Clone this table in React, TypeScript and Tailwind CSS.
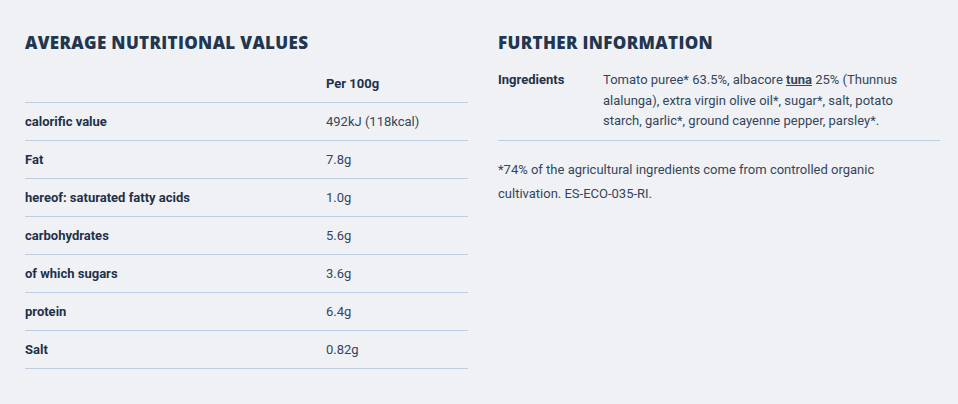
const rows = [
  ["calorific value", "492kJ (118kcal)"],
  ["Fat", "7.8g"],
  ["hereof: saturated fatty acids", "1.0g"],
  ["carbohydrates", "5.6g"],
  ["of which sugars", "3.6g"],
  ["protein", "6.4g"],
  ["Salt", "0.82g"],
];

export default function App() {
  return (
    <div className="min-h-[404px] w-[958px] bg-[#eff1f5] font-['Roboto',sans-serif] text-[13px] text-[#34465c]">
      <div className="flex gap-[30px] pl-[25px] pr-[18px] pt-[31px]">
        <section className="w-[443px]">
          <h2 className="font-['Open_Sans',sans-serif] text-[17px] font-extrabold uppercase leading-6 tracking-[0.02em] text-[#22364f]">
            Average nutritional values
          </h2>
          <div className="mt-[10px]">
            <div className="flex h-[38px] items-center border-b border-[#bccfe2]">
              <span className="w-[301px]" />
              <span className="font-bold text-[#1f3148]">Per 100g</span>
            </div>
            {rows.map(([label, value]) => (
              <div key={label} className="flex h-[38px] items-center border-b border-[#bccfe2]">
                <span className="w-[301px] font-bold text-[#1f3148]">{label}</span>
                <span>{value}</span>
              </div>
            ))}
          </div>
        </section>
        <section className="w-[442px]">
          <h2 className="font-['Open_Sans',sans-serif] text-[17px] font-extrabold uppercase leading-6 tracking-[0.02em] text-[#22364f]">
            Further information
          </h2>
          <div className="mt-[15px] flex border-b border-[#bccfe2] pb-[8px] leading-[20.5px]">
            <span className="w-[105px] shrink-0 font-bold text-[#1f3148]">Ingredients</span>
            <p className="pr-[14px]">
              Tomato puree* 63.5%, albacore <span className="font-bold underline">tuna</span> 25% (Thunnus alalunga), extra virgin
              olive oil*, sugar*, salt, potato starch, garlic*, ground cayenne pepper, parsley*.
            </p>
          </div>
          <p className="mt-[17px] leading-6">
            *74% of the agricultural ingredients come from controlled organic cultivation. ES-ECO-035-RI.
          </p>
        </section>
      </div>
    </div>
  );
}
